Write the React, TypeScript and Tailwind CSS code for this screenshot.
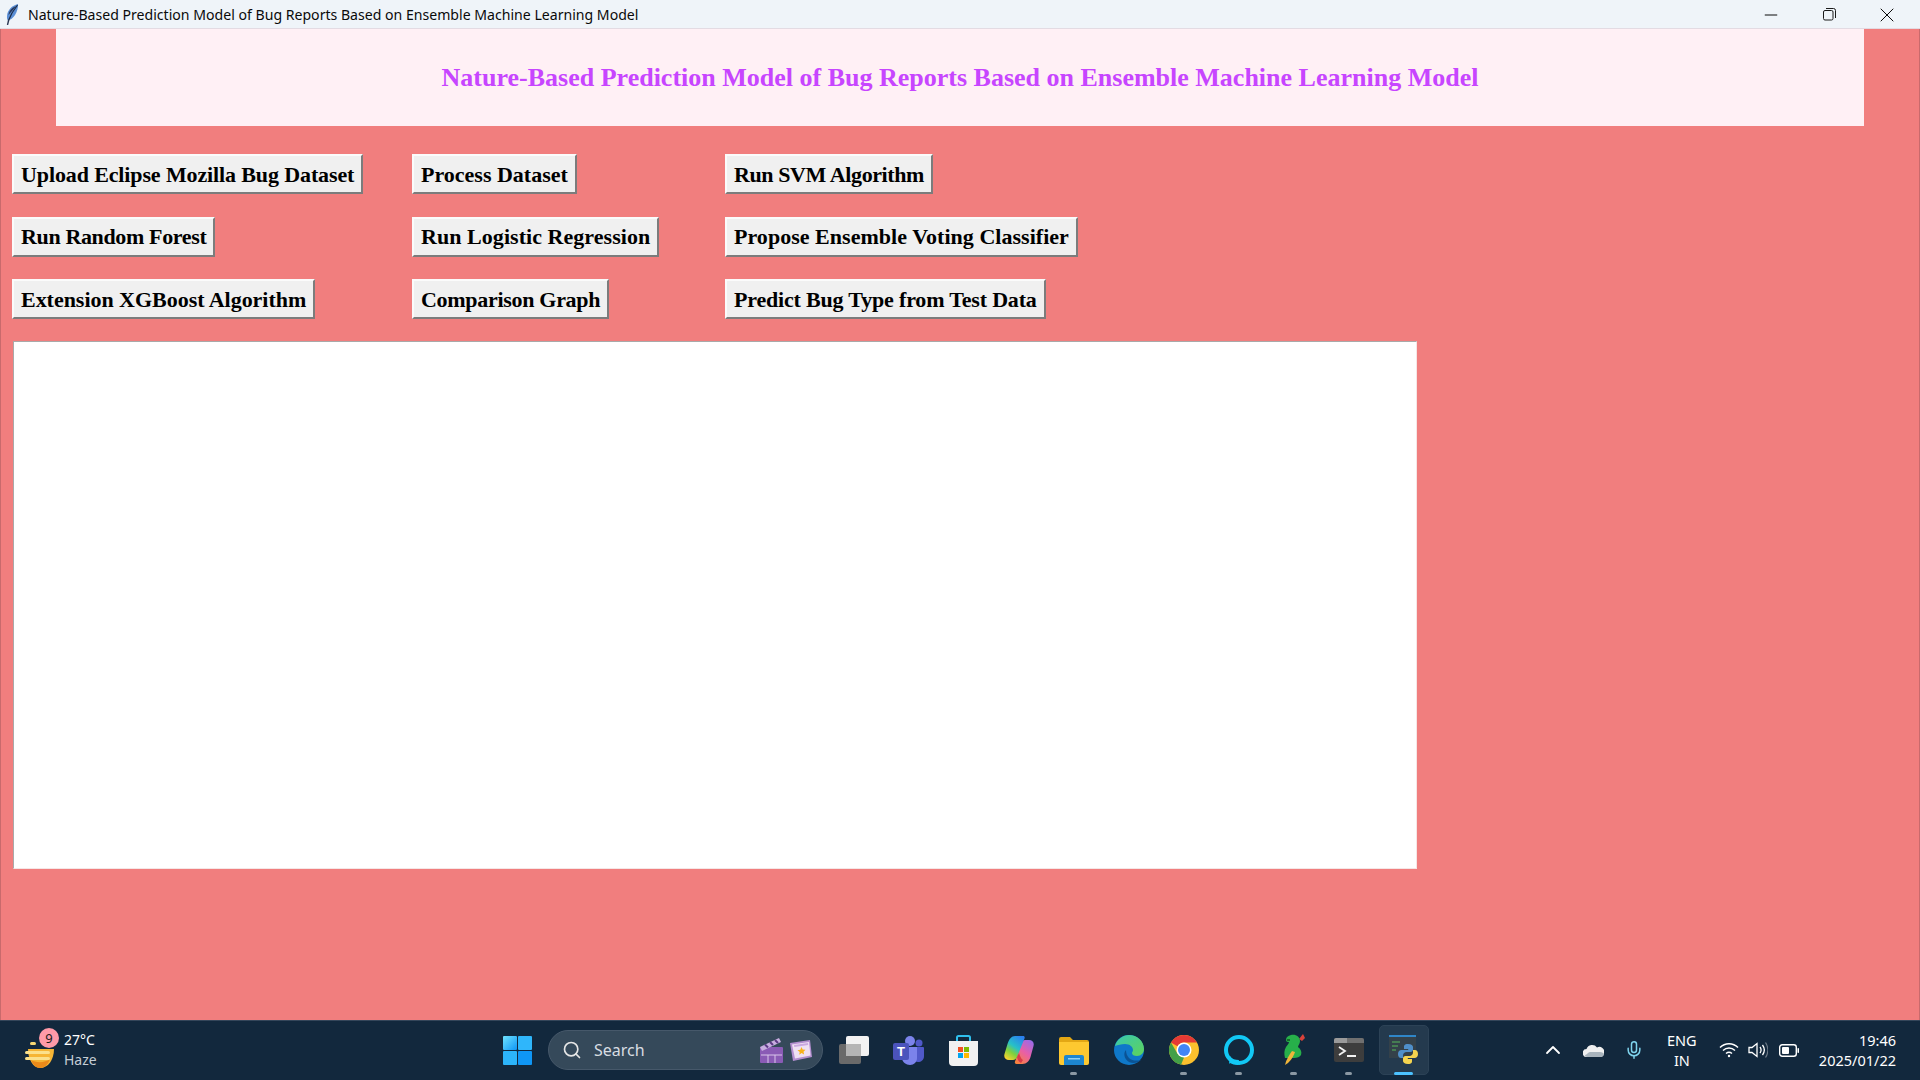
import React from "react";
import { Search, ChevronUp, Mic, Minus, X } from "lucide-react";

const buttons = [
  { label: "Upload Eclipse Mozilla Bug Dataset", tracking: "tracking-[-0.12px]" },
  { label: "Process Dataset", tracking: "tracking-normal" },
  { label: "Run SVM Algorithm", tracking: "tracking-[-0.4px]" },
  { label: "Run Random Forest", tracking: "tracking-[-0.36px]" },
  { label: "Run Logistic Regression", tracking: "tracking-[0.05px]" },
  { label: "Propose Ensemble Voting Classifier", tracking: "tracking-[0.03px]" },
  { label: "Extension XGBoost Algorithm", tracking: "tracking-[-0.03px]" },
  { label: "Comparison Graph", tracking: "tracking-[-0.3px]" },
  { label: "Predict Bug Type from Test Data", tracking: "tracking-[-0.18px]" },
];

function Feather() {
  return (
    <svg width="13" height="21" viewBox="0 0 13 21">
      <path d="M12 0C6 1.500 1.500 6 1 12c-.2 2 .2 3.500 1 4.500C7 15.500 12.500 8 12 0Z" fill="#5b8fd6" />
      <path d="M10 2C6 3.500 3 7 2.500 11 5 8 8 5 10 2Z" fill="#27365a" />
      <path d="M11.500 1C7.500 6 4.500 11 2.500 16.500" stroke="#1b2a44" strokeWidth="1.200" fill="none" />
      <path d="M2.700 16 1.500 21" stroke="#2a3550" strokeWidth="1.400" />
    </svg>
  );
}

function RestoreIcon() {
  return (
    <svg width="13" height="13" viewBox="0 0 13 13" fill="none" stroke="#1a1a1a" strokeWidth="1">
      <rect x="0.500" y="2.500" width="9.500" height="9.500" rx="1.500" />
      <path d="M3 .5h7.500A2 2 0 0 1 12.500 2.500V10" />
    </svg>
  );
}

function WeatherIcon() {
  return (
    <svg width="32" height="26" viewBox="0 0 32 26">
      <path d="M3 7h26c0 11-6 19-14 19C8 26 3 17 3 7Z" fill="#f6b535" />
      <path d="M6 18c5 3 14 3 19-1-2 6-6 9-10 9-4 0-7-3-9-8Z" fill="#ec8a1a" />
      <rect x="5" y="0" width="6" height="3" rx="1.500" fill="#f7d774" />
      <rect x="0" y="9" width="25" height="3" rx="1.500" fill="#fbe08c" />
      <rect x="0" y="15" width="25" height="3" rx="1.500" fill="#fbe08c" />
    </svg>
  );
}

function WindowsLogo() {
  return (
    <svg width="29" height="29" viewBox="0 0 29 29">
      <defs>
        <linearGradient id="win" x1="0" y1="0" x2="1" y2="1">
          <stop offset="0" stopColor="#6fe3ff" />
          <stop offset="1" stopColor="#0f96f5" />
        </linearGradient>
      </defs>
      <rect x="0" y="0" width="14" height="14" rx="1" fill="url(#win)" />
      <rect x="15" y="0" width="14" height="14" rx="1" fill="#2fb6fb" />
      <rect x="0" y="15" width="14" height="14" rx="1" fill="#2cb4fa" />
      <rect x="15" y="15" width="14" height="14" rx="1" fill="#0f96f5" />
    </svg>
  );
}

function ClapperIcon() {
  return (
    <svg width="26" height="28" viewBox="0 0 26 28">
      <rect x="2" y="11" width="23" height="16" rx="1" fill="#8a5bb5" />
      <path d="M3 19h21M10 19v8M17 19v8" stroke="#d9c6ea" strokeWidth="1" />
      <path d="M2 11 21 2l2 4-19 9Z" fill="#c8aee0" />
      <path d="M7 8.500l3 3M12 6l3 3M17 4l3 3" stroke="#5c3a85" strokeWidth="2" />
    </svg>
  );
}

function NewsIcon() {
  return (
    <svg width="23" height="23" viewBox="0 0 23 23">
      <path d="M1 4 21 1l2 17-19 4Z" fill="#b48fd0" />
      <path d="M3 5.500 20 3l1.500 13.500L6 19.500Z" fill="#efe0f3" />
      <path d="M5 6 19 4l.2 2L5.300 8Z" fill="#c9a8e0" />
      <path d="m12.500 8 1.200 2.500 2.800.3-2 1.900.6 2.700-2.500-1.400-2.400 1.700.5-2.800-2.200-1.700 2.800-.4Z" fill="#f7b21b" />
    </svg>
  );
}

function TaskViewIcon() {
  return (
    <svg width="30" height="28" viewBox="0 0 30 28">
      <rect x="0" y="8" width="22" height="20" rx="2" fill="#6a6a6a" />
      <rect x="7" y="0" width="23" height="20" rx="2" fill="#f2f2f2" />
      <rect x="7" y="8" width="15" height="12" fill="#b5b5b5" />
    </svg>
  );
}

function TeamsIcon() {
  return (
    <svg width="31" height="30" viewBox="0 0 31 30">
      <circle cx="17" cy="6" r="5" fill="#7b83eb" />
      <circle cx="26" cy="8" r="3.500" fill="#5059c9" />
      <path d="M21 12h9a1 1 0 0 1 1 1v8c0 4-3 6-6 6s-4-1-4-3Z" fill="#5059c9" />
      <path d="M9 12h15v11c0 4-3 7-7 7s-8-3-8-7Z" fill="#7b83eb" />
      <rect x="0" y="8" width="16" height="17" rx="2" fill="#4b53bc" />
      <text x="8" y="21" textAnchor="middle" fontSize="13" fontWeight="700" fill="#fff" fontFamily="Liberation Sans, sans-serif">T</text>
    </svg>
  );
}

function StoreIcon() {
  return (
    <svg width="29" height="31" viewBox="0 0 29 31">
      <path d="M8 6V2.500A1.500 1.500 0 0 1 9.500 1h10A1.500 1.500 0 0 1 21 2.500V6" fill="none" stroke="#2fc0ee" strokeWidth="2" />
      <path d="M0 6h29v21a4 4 0 0 1-4 4H4a4 4 0 0 1-4-4Z" fill="#f1f1f1" />
      <rect x="9" y="12" width="5" height="5" fill="#f25022" />
      <rect x="15" y="12" width="5" height="5" fill="#7fba00" />
      <rect x="9" y="18" width="5" height="5" fill="#00a4ef" />
      <rect x="15" y="18" width="5" height="5" fill="#ffb900" />
    </svg>
  );
}

function CopilotIcon() {
  return (
    <svg width="30" height="28" viewBox="0 0 30 28">
      <defs>
        <linearGradient id="cpa" x1="0.800" y1="0" x2="0.200" y2="1">
          <stop offset="0" stopColor="#2a7ff0" />
          <stop offset="0.450" stopColor="#27c0c8" />
          <stop offset="0.700" stopColor="#7fd13c" />
          <stop offset="1" stopColor="#f8d22f" />
        </linearGradient>
        <linearGradient id="cpb" x1="0.800" y1="0" x2="0.200" y2="1">
          <stop offset="0" stopColor="#9a6be8" />
          <stop offset="0.500" stopColor="#e85fa8" />
          <stop offset="1" stopColor="#f8823c" />
        </linearGradient>
      </defs>
      <path d="M21 4h4c3.500 0 5.500 2.500 4.500 6l-3 11c-1.200 4-4 7-8 7h-6c-1.500 0-2-1-1.500-2.500L18 6c.4-1.200 1.500-2 3-2Z" fill="url(#cpb)" />
      <path d="M11 0h8c1.500 0 2 1 1.500 2.500L13 21c-.6 1.500-2 3-4 3H5c-3.500 0-5.500-2.500-4.500-6l3-10C5 3 7.500 0 11 0Z" fill="url(#cpa)" />
      <path d="M13 21l2-4c1 3 2 6 4 7l-2 3c-2-1-3.500-3-4-6Z" fill="#d93a4a" />
    </svg>
  );
}

function FilesIcon() {
  return (
    <svg width="30" height="29" viewBox="0 0 30 29">
      <path d="M0 3a2 2 0 0 1 2-2h9l3 3h14a2 2 0 0 1 2 2v4H0Z" fill="#e3a714" />
      <path d="M0 6h30v21a2 2 0 0 1-2 2H2a2 2 0 0 1-2-2Z" fill="#fdc830" />
      <path d="M5 21a2 2 0 0 1 2-2h16a2 2 0 0 1 2 2v8H5Z" fill="#1d86cf" />
      <rect x="9" y="22" width="12" height="1.500" fill="#8fd0f5" />
    </svg>
  );
}

function EdgeIcon() {
  return (
    <svg width="30" height="30" viewBox="0 0 30 30">
      <defs>
        <linearGradient id="edg" x1="0" y1="0" x2="1" y2="1">
          <stop offset="0" stopColor="#38c8b0" />
          <stop offset="1" stopColor="#5fd35a" />
        </linearGradient>
      </defs>
      <circle cx="15" cy="15" r="15" fill="#0f78c9" />
      <path d="M1 11C3 4 9 0 15 0c8 0 15 6 15 14 0 4-3 7-7 7-3 0-5-1-5-3 0-1 1-1.500 1-3 0-3-3-6-8-6-4 0-7 1-10 2Z" fill="url(#edg)" />
      <path d="M12 15c-3 3-2 9 3 12 4 2 9 1 12-2-4 1-9 1-12-2-2-2-3-5-3-8Z" fill="#0b5394" />
    </svg>
  );
}

function ChromeIcon() {
  return (
    <svg width="30" height="30" viewBox="0 0 30 30">
      <circle cx="15" cy="15" r="15" fill="#fbc02d" />
      <path d="M15 0a15 15 0 0 1 13 7.500H15a7.500 7.500 0 0 0-6.500 3.750L2 7.500A15 15 0 0 1 15 0Z" fill="#e53935" />
      <path d="M2 7.500l6.500 11.250A7.500 7.500 0 0 0 15 22.500L8.500 28.500A15 15 0 0 1 2 7.500Z" fill="#43a047" />
      <path d="M8.500 18.750 15 22.500l-3 7.200A15 15 0 0 1 5 26Z" fill="#43a047" />
      <circle cx="15" cy="15" r="7.500" fill="#fff" />
      <circle cx="15" cy="15" r="6" fill="#4285f4" />
    </svg>
  );
}

function AlexaIcon() {
  return (
    <svg width="30" height="30" viewBox="0 0 30 30">
      <circle cx="15" cy="15" r="13" fill="none" stroke="#12c8f5" strokeWidth="4" />
      <path d="M6 21c2 3 5 4 9 4l-1 5c-3 0-6-1-8-2l-1 1Z" fill="#12c8f5" />
    </svg>
  );
}

function ParrotIcon() {
  return (
    <svg width="24" height="32" viewBox="0 0 24 32">
      <path d="M17 5 21 0l2 4-3 3Z" fill="#d9423a" />
      <path d="M9 1c5-1 9 2 9 6 0 3-2 4-2 6 3 2 4 5 3 8-1 2-4 3-7 3H3c-1-4-1-8 1-11 1-2 3-3 3-5-1 0-3 0-3-2 0-3 2-4 5-5Z" fill="#27b04a" />
      <path d="M10 17c-3 4-6 9-7 14 4-2 8-7 10-13Z" fill="#f0b53a" />
      <path d="M5 6h3" stroke="#11521f" strokeWidth="1.500" />
    </svg>
  );
}

function TerminalIcon() {
  return (
    <svg width="30" height="24" viewBox="0 0 30 24">
      <rect x="0" y="0" width="30" height="24" rx="2" fill="#3d3d3d" />
      <path d="M0 2a2 2 0 0 1 2-2h11v5H0Z" fill="#9a9a9a" />
      <path d="M13 0h15a2 2 0 0 1 2 2v3H13Z" fill="#707070" />
      <path d="m5 9 6 4-6 4" fill="none" stroke="#f2f2f2" strokeWidth="1.800" />
      <path d="M13 18h9" stroke="#f2f2f2" strokeWidth="2" />
    </svg>
  );
}

function PythonAppIcon() {
  const snake = "M10 0C6 0 6 2 6 3v2h4.200v1H3.500C1.500 6 0 7.500 0 10s1.300 4 3 4h2v-2.500c0-2 1.700-3.500 3.500-3.500h4c1.500 0 2.500-1 2.500-2.500V3c0-1.500-1.500-3-5-3Z";
  return (
    <svg width="30" height="30" viewBox="0 0 30 30">
      <rect x="0" y="0" width="27" height="23" fill="#34414a" />
      <rect x="0" y="0" width="27" height="2" fill="#2f86c8" />
      <path d="M3 7h8M3 11h6M3 15h4" stroke="#56b85a" strokeWidth="1" />
      <g transform="translate(9 9)">
        <path d={snake} fill="#4f8fc9" />
        <path d={snake} fill="#f5d44f" transform="rotate(180 10 10)" />
      </g>
    </svg>
  );
}

function CloudIcon() {
  return (
    <svg width="21" height="13" viewBox="0 0 21 13">
      <path d="M4 13a4 4 0 0 1-.5-8A6 6 0 0 1 14 3.500 4.800 4.800 0 0 1 21 9c0 2-1.500 4-4 4Z" fill="#f0f0f0" />
      <path d="M7 8h10c2 0 4 1 4 3l-2 2H4c-1 0-2-1-2-2 2 0 3-3 5-3Z" fill="#a9b4bd" />
    </svg>
  );
}

function WifiIcon() {
  return (
    <svg width="20" height="16" viewBox="0 0 20 16" fill="none" stroke="#fff" strokeWidth="1.500">
      <path d="M1 5.500c5-5 13-5 18 0" />
      <path d="M4 8.500c3.500-3.300 8.500-3.300 12 0" />
      <path d="M7 11.500c1.800-1.500 4.200-1.500 6 0" />
      <circle cx="10" cy="14" r="1.200" fill="#fff" stroke="none" />
    </svg>
  );
}

function SpeakerIcon() {
  return (
    <svg width="20" height="18" viewBox="0 0 20 18" fill="none" stroke="#fff" strokeWidth="1.300">
      <path d="M1 6.500h3L9 2.500v13L4 11.500H1Z" />
      <path d="M12 6c1.300 1.800 1.300 4.200 0 6" />
      <path d="M14.500 4c2.200 3 2.200 7 0 10" />
      <path d="M17.500 1.500c3 4.500 3 10.500 0 15" stroke="#6b7885" />
    </svg>
  );
}

function BatteryIcon() {
  return (
    <svg width="20" height="13" viewBox="0 0 20 13">
      <rect x="0.700" y="0.700" width="16.600" height="11.600" rx="2.500" fill="none" stroke="#fff" strokeWidth="1.400" />
      <rect x="3" y="3" width="7" height="7" rx="1" fill="#fff" />
      <rect x="18.500" y="4" width="1.500" height="5" rx="0.700" fill="#fff" />
    </svg>
  );
}

const taskbarApps = [
  { key: "taskview", icon: <TaskViewIcon /> },
  { key: "teams", icon: <TeamsIcon /> },
  { key: "store", icon: <StoreIcon /> },
  { key: "copilot", icon: <CopilotIcon /> },
  { key: "files", icon: <FilesIcon />, running: true },
  { key: "edge", icon: <EdgeIcon /> },
  { key: "chrome", icon: <ChromeIcon />, running: true },
  { key: "alexa", icon: <AlexaIcon />, running: true },
  { key: "parrot", icon: <ParrotIcon />, running: true },
  { key: "terminal", icon: <TerminalIcon />, running: true },
  { key: "python", icon: <PythonAppIcon />, active: true },
];

function Taskbar() {
  return (
    <footer className="h-[60px] shrink-0 flex items-center pb-[1px] bg-[#12283d] border-t border-[#34465a] font-['Noto_Sans',sans-serif] text-white">
      {/* Weather */}
      <div className="w-[503px] shrink-0 flex items-center pl-[25px]">
        <div className="relative w-[32px] h-[26px] mt-[10px]">
          <WeatherIcon />
          <span className="absolute -top-[14px] left-[14px] w-[20px] h-[20px] rounded-full bg-[#ff9aa8] text-[#1a1a1a] text-[13px] leading-[20px] text-center">9</span>
        </div>
        <div className="ml-[7px] flex flex-col text-[14px] leading-[20px]">
          <span>27°C</span>
          <span className="text-[#c5cdd5]">Haze</span>
        </div>
      </div>

      <WindowsLogo />

      {/* Search */}
      <div className="ml-[16px] w-[275px] h-[40px] shrink-0 rounded-full bg-[#35495a] border border-[#46586a] flex items-center pl-[13px] pr-[10px]">
        <Search className="w-[20px] h-[20px] text-[#e6e6e6]" strokeWidth={2} />
        <span className="ml-[12px] text-[16px] text-[#d8dde2]">Search</span>
        <div className="ml-auto flex items-center gap-[5px]">
          <ClapperIcon />
          <NewsIcon />
        </div>
      </div>

      {/* Pinned apps */}
      <div className="ml-[3px] flex items-center">
        {taskbarApps.map((app) => (
          <div key={app.key} className="relative w-[55px] h-[50px] flex items-center justify-center">
            {app.active && <div className="absolute inset-y-0 left-[3px] right-[2px] rounded-[5px] bg-[#243a4e] border border-[#2c4256]" />}
            <div className="relative flex items-center justify-center">{app.icon}</div>
            {app.running && <div className="absolute bottom-0 left-[24px] w-[7px] h-[3px] rounded-full bg-[#8b98a3]" />}
            {app.active && <div className="absolute bottom-0 left-[18px] w-[19px] h-[3px] rounded-full bg-[#4cc2ff]" />}
          </div>
        ))}
      </div>

      {/* Tray */}
      <div className="ml-auto flex items-center pr-[24px]">
        <ChevronUp className="w-[24px] h-[24px] mr-[18px]" strokeWidth={1.800} />
        <div className="mr-[20px]"><CloudIcon /></div>
        <Mic className="w-[20px] h-[20px] text-[#7fd4ee] mr-[16px]" strokeWidth={1.800} />
        <div className="w-[44px] flex flex-col items-center text-[14.500px] leading-[20px] mr-[15px]">
          <span>ENG</span>
          <span>IN</span>
        </div>
        <div className="mr-[9px]"><WifiIcon /></div>
        <div className="mr-[11px]"><SpeakerIcon /></div>
        <div className="mr-[20px]"><BatteryIcon /></div>
        <div className="flex flex-col items-end text-[14.500px] leading-[20px]">
          <span>19:46</span>
          <span>2025/01/22</span>
        </div>
      </div>
    </footer>
  );
}

export default function App() {
  return (
    <div className="w-[1920px] h-[1080px] flex flex-col overflow-hidden">
      {/* Title bar */}
      <header className="h-[29px] shrink-0 flex items-center pt-[1px] bg-[#eff4f9] border-b border-[#e3dbe3] font-['Noto_Sans',sans-serif] text-[14.100px] text-[#0a0a0a]">
        <div className="ml-[6px] w-[22px] flex"><Feather /></div>
        <span>Nature-Based Prediction Model of Bug Reports Based on Ensemble Machine Learning Model</span>
        <div className="ml-auto mr-[4px] flex items-center">
          <div className="w-[58px] flex justify-center"><Minus className="w-[20px] h-[20px]" strokeWidth={1.200} /></div>
          <div className="w-[58px] flex justify-center"><RestoreIcon /></div>
          <div className="w-[58px] flex justify-center"><X className="w-[24px] h-[24px]" strokeWidth={1} /></div>
        </div>
      </header>

      {/* Tk window */}
      <main className="flex-1 bg-[#f17e7e] border-x border-x-[#c96a6c] font-['Liberation_Serif',serif] font-bold">
        <div className="ml-[55px] w-[1808px] h-[97px] bg-[#fff0f5] flex items-center justify-center text-[26px] text-[#c745ff]">
          Nature-Based Prediction Model of Bug Reports Based on Ensemble Machine Learning Model
        </div>

        <div className="mt-[28px] ml-[11px] grid grid-cols-[400px_313px_auto] gap-y-[22.500px] justify-items-start">
          {buttons.map((btn) => (
            <button
              key={btn.label}
              className={`h-[40px] px-[7px] bg-[#f0f0f0] border-2 border-t-[#fbfbfb] border-l-[#fbfbfb] border-r-[#7c7c7c] border-b-[#7c7c7c] text-[22px] text-black whitespace-nowrap ${btn.tracking}`}
            >
              {btn.label}
            </button>
          ))}
        </div>

        <div className="mt-[22px] ml-[12px] w-[1404px] h-[528px] bg-white border border-t-[#a9a9a9] border-l-[#a9a9a9] border-r-[#f5e6e6] border-b-[#f5e6e6]" />
      </main>

      <Taskbar />
    </div>
  );
}
